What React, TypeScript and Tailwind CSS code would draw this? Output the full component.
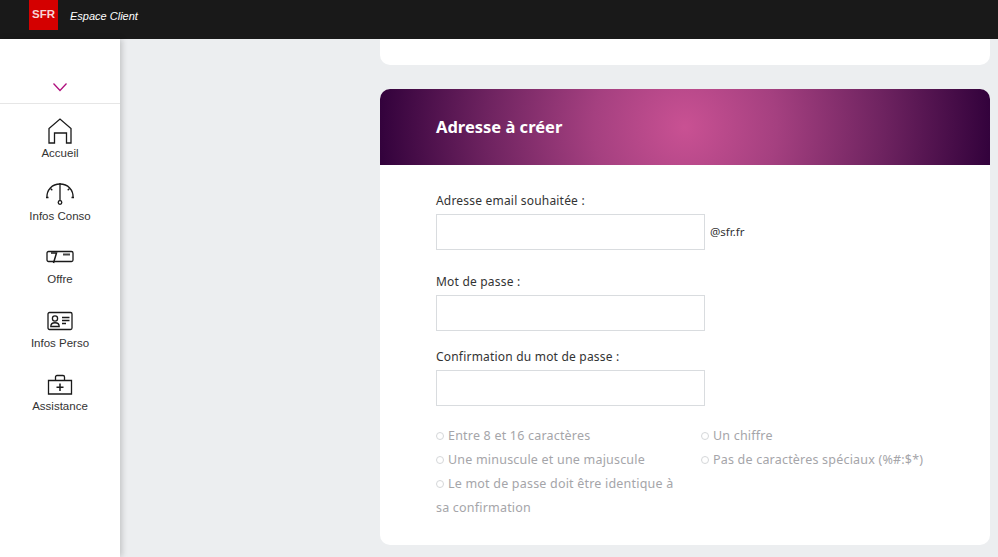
import React from "react";

const cardFont = "font-['Noto_Sans',sans-serif]";

const icons: Record<string, React.ReactNode> = {
  home: (
    <svg width="26" height="26" viewBox="0 0 26 26" fill="none" stroke="#1a1a1a" strokeWidth="1.3">
      <path d="M2 25V10.5L13 1l11 9.5V25h-4.500V15H7.500v10z" />
    </svg>
  ),
  gauge: (
    <svg width="30" height="24" viewBox="0 0 30 24" fill="none" stroke="#1a1a1a" strokeWidth="1.3">
      <path d="M2 15.500C1.500 8 7 2 15 2s13.500 6 13 13.500" />
      <path d="M1 15.500h2.500M26.500 15.500H29M5.500 6.500l1.800 1.800M24.500 6.500l-1.800 1.800" />
      <path d="M15 1v18" />
      <circle cx="15" cy="20.500" r="1.800" />
    </svg>
  ),
  offer: (
    <svg width="28" height="14" viewBox="0 0 28 14" fill="none" stroke="#1a1a1a" strokeWidth="1.3">
      <rect x="1" y="1.500" width="26" height="10" rx="1.500" />
      <path d="M5 3h5.500L7.500 13" strokeWidth="1.500" />
      <path d="M17 4.500h7" strokeWidth="2" stroke="#444" />
    </svg>
  ),
  card: (
    <svg width="26" height="20" viewBox="0 0 26 20" fill="none" stroke="#1a1a1a" strokeWidth="1.3">
      <rect x="1" y="1.500" width="24" height="17" rx="1.500" />
      <circle cx="8" cy="7.500" r="2.600" />
      <path d="M3.800 15.500c0-5 8.400-5 8.400 0z" />
      <path d="M15 6.500h7.500M15 9.500h7.500M15 12.500h4" />
    </svg>
  ),
  kit: (
    <svg width="26" height="21" viewBox="0 0 26 21" fill="none" stroke="#1a1a1a" strokeWidth="1.3">
      <path d="M1.500 6.500h23v13.500h-23z" />
      <path d="M8.500 6.500V3a1.500 1.500 0 0 1 1.500-1.500h6A1.500 1.500 0 0 1 17.500 3v3.500" />
      <path d="M13 9.500v7.500M9.500 13.200h7" strokeWidth="1.500" />
    </svg>
  ),
};

const navItems = [
  { label: "Accueil", icon: "home", h: "h-[63px]" },
  { label: "Infos Conso", icon: "gauge", h: "h-[63px]" },
  { label: "Offre", icon: "offer", h: "h-[64px]" },
  { label: "Infos Perso", icon: "card", h: "h-[63px]" },
  { label: "Assistance", icon: "kit", h: "h-[63px]" },
];

function Field({ label, suffix, className }: { label: string; suffix?: string; className?: string }) {
  return (
    <div className={className}>
      <label className="block text-[12px] leading-[16px] tracking-[0.2px] text-[#333]">{label}</label>
      <div className="mt-[5px] flex items-center">
        <input className="h-[36px] w-[269px] border border-[#d9dcdf] bg-white" />
        {suffix && <span className="ml-[5px] text-[11.5px] text-[#333]">{suffix}</span>}
      </div>
    </div>
  );
}

function Rule({ text }: { text: string }) {
  return (
    <p className="text-[12.5px] leading-[24px] tracking-[0.2px] text-[#a5a5a9]">
      <span className="mr-[4px] inline-block h-[8px] w-[8px] rounded-full border border-[#d5d7d9]" />
      {text}
    </p>
  );
}

export default function App() {
  return (
    <div className="flex h-[557px] flex-col overflow-hidden bg-[#eceef0]">
      {/* Header */}
      <header className="flex h-[39px] shrink-0 bg-[#191919] pl-[29px]">
        <div className="flex h-[30px] w-[29px] items-center justify-center bg-[#d40000] font-['Liberation_Sans',sans-serif] text-[11.5px] font-bold text-[#f6d5d5]">
          SFR
        </div>
        <span className="ml-[12px] mt-[9px] font-['Liberation_Sans',sans-serif] text-[11px] italic leading-[14px] text-white">
          Espace Client
        </span>
      </header>

      <div className="flex min-h-0 flex-1">
        {/* Sidebar */}
        <aside className="w-[120px] shrink-0 bg-white font-['Liberation_Sans',sans-serif] shadow-[2px_0_6px_rgba(0,0,0,0.18)]">
          <div className="flex h-[65px] items-end justify-center border-b border-[#e6e6e6] pb-[11px]">
            <svg width="16" height="10" viewBox="0 0 16 10" fill="none" stroke="#b0107e" strokeWidth="1.3">
              <path d="M1.500 1.500 8 8.500l6.500-7" />
            </svg>
          </div>
          <nav className="pt-[13px]">
            {navItems.map((item) => (
              <div key={item.label} className={`flex flex-col items-center ${item.h}`}>
                <div className="flex h-[28px] items-center justify-center">{icons[item.icon]}</div>
                <span className="mt-[1px] text-[11.5px] leading-[14px] text-[#333]">{item.label}</span>
              </div>
            ))}
          </nav>
        </aside>

        {/* Content */}
        <main className={`min-w-0 flex-1 pl-[260px] pr-[8px] ${cardFont}`}>
          <div className="h-[26px] rounded-b-[10px] bg-white" />
          <section className="mt-[24px] h-[456px] overflow-hidden rounded-[10px] bg-white">
            <div className="flex h-[76px] items-center bg-[radial-gradient(circle_305px_at_center,#c95193_0%,#a54080_30%,#6e2360_65%,#33023c_100%)] pl-[56px]">
              <h2 className="text-[16.5px] font-bold text-white">Adresse à créer</h2>
            </div>
            <div className="px-[56px] pt-[28px]">
              <Field label="Adresse email souhaitée :" suffix="@sfr.fr" />
              <Field label="Mot de passe :" className="mt-[24px]" />
              <Field label="Confirmation du mot de passe :" className="mt-[18px]" />
              <div className="mt-[18px] grid grid-cols-[265px_1fr]">
                <Rule text="Entre 8 et 16 caractères" />
                <Rule text="Un chiffre" />
                <Rule text="Une minuscule et une majuscule" />
                <Rule text="Pas de caractères spéciaux (%#:$*)" />
                <div className="w-[240px]">
                  <Rule text="Le mot de passe doit être identique à sa confirmation" />
                </div>
              </div>
            </div>
          </section>
        </main>
      </div>
    </div>
  );
}
